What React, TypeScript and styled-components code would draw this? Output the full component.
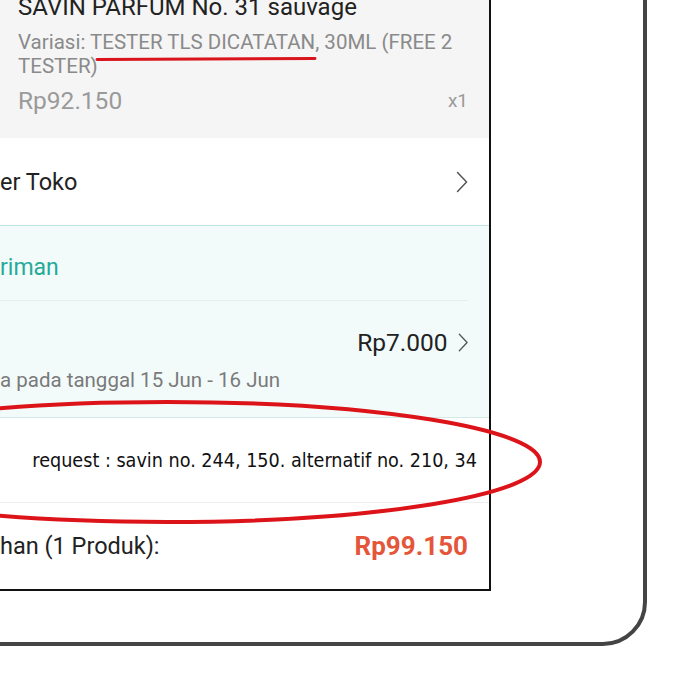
import React from 'react'
import styled, { createGlobalStyle } from 'styled-components'

const GlobalStyle = createGlobalStyle`
   html, body {
      margin: 0;
      padding: 0;
      background: #ffffff;
   }
   body {
      font-family: Roboto, 'Liberation Sans', sans-serif;
   }
`

const Page = styled.div`
   position: relative;
   width: 681px;
   height: 681px;
   overflow: hidden;
   background: #ffffff;
`

const Device = styled.div`
   box-sizing: border-box;
   width: 687px;
   height: 686px;
   margin: -40px 0 0 -40px;
   padding: 29px 152px 51px 36px;
   border: 4px solid #444444;
   border-bottom-right-radius: 44px;
`

const Screen = styled.div`
   box-sizing: border-box;
   height: 100%;
   display: flex;
   flex-direction: column;
   border-right: 2px solid #111111;
   border-bottom: 2px solid #111111;
   background: #ffffff;
   overflow: hidden;
`

const Product = styled.section`
   height: 145px;
   box-sizing: border-box;
   padding: 0 21px 0 18px;
   background: #f5f5f5;
   display: flex;
   flex-direction: column;
`

const Title = styled.div`
   font-size: 24px;
   line-height: 28px;
   color: #222222;
   white-space: nowrap;
`

const Variant = styled.div`
   margin-top: 10px;
   font-size: 20.5px;
   line-height: 23.5px;
   color: #8a8a8a;
`

const PriceLine = styled.div`
   margin-top: 8px;
   display: flex;
   justify-content: space-between;
   align-items: center;
`

const Price = styled.span`
   font-size: 24.5px;
   color: #9a9a9a;
`

const Qty = styled.span`
   font-size: 19px;
   color: #9a9a9a;
`

const Row = styled.div<{ $height: number }>`
   height: ${p => p.$height}px;
   box-sizing: border-box;
   padding-right: 21px;
   display: flex;
   align-items: center;
   justify-content: space-between;
   font-size: 23.5px;
   color: #222222;
`

const Shipping = styled.section`
   background: #f2fbfa;
   border-top: 1px solid #bfe5df;
   border-bottom: 1px solid #d3e9e6;
`

const ShipTitle = styled.div`
   height: 75px;
   box-sizing: border-box;
   padding-top: 8px;
   display: flex;
   align-items: center;
   font-size: 23px;
   color: #26aa99;
   margin-right: 21px;
   border-bottom: 1px solid #e3efed;
`

const ShipOption = styled.div`
   height: 116px;
   box-sizing: border-box;
   padding: 27px 21px 0 0;
   display: flex;
   flex-direction: column;
`

const ShipPrice = styled.div`
   display: flex;
   justify-content: flex-end;
   align-items: center;
   gap: 10px;
   font-size: 24.5px;
   color: #222222;
`

const ShipDate = styled.div`
   margin-top: 11px;
   font-size: 20.5px;
   color: #7a7a7a;
`

const Message = styled.div`
   height: 85px;
   box-sizing: border-box;
   padding-right: 12px;
   display: flex;
   align-items: center;
   justify-content: flex-end;
   border-bottom: 1px solid #eeeeee;
   font-family: 'Liberation Sans Narrow', 'DejaVu Sans Condensed', 'Liberation Sans', sans-serif;
   font-size: 19.6px;
   color: #111111;
`

const Total = styled.span`
   font-size: 26px;
   font-weight: 700;
   color: #e4553a;
`

const Annotations = styled.svg`
   position: absolute;
   left: 0;
   top: 0;
   pointer-events: none;
`

const Chevron = ({ size = 22 }: { size?: number }) => (
   <svg width={size * 0.55} height={size} viewBox="0 0 12 22" fill="none">
      <path d="M1.5 1.5 L10.5 11 L1.5 20.5" stroke="#555" strokeWidth="1.5" strokeLinecap="round" strokeLinejoin="round" />
   </svg>
)

export default function App() {
   return (
      <Page>
         <GlobalStyle />
         <Device>
            <Screen>
               <Product>
                  <Title>SAVIN PARFUM No. 31 sauvage</Title>
                  <Variant>Variasi: TESTER TLS DICATATAN, 30ML (FREE 2 TESTER)</Variant>
                  <PriceLine>
                     <Price>Rp92.150</Price>
                     <Qty>x1</Qty>
                  </PriceLine>
               </Product>
               <Row $height={87}>
                  <span>er Toko</span>
                  <Chevron />
               </Row>
               <Shipping>
                  <ShipTitle>riman</ShipTitle>
                  <ShipOption>
                     <ShipPrice>
                        <span>Rp7.000</span>
                        <Chevron size={19} />
                     </ShipPrice>
                     <ShipDate>a pada tanggal 15 Jun - 16 Jun</ShipDate>
                  </ShipOption>
               </Shipping>
               <Message>request : savin no. 244, 150. alternatif no. 210, 34</Message>
               <Row $height={86}>
                  <span>han (1 Produk):</span>
                  <Total>Rp99.150</Total>
               </Row>
            </Screen>
         </Device>
         <Annotations width={681} height={681} viewBox="0 0 681 681">
            <path d="M97 59.5 L315 58.5" stroke="#d9141c" strokeWidth="3" strokeLinecap="round" />
            <ellipse cx={167} cy={462} rx={373} ry={60} fill="none" stroke="#dc1419" strokeWidth="4" />
         </Annotations>
      </Page>
   )
}
